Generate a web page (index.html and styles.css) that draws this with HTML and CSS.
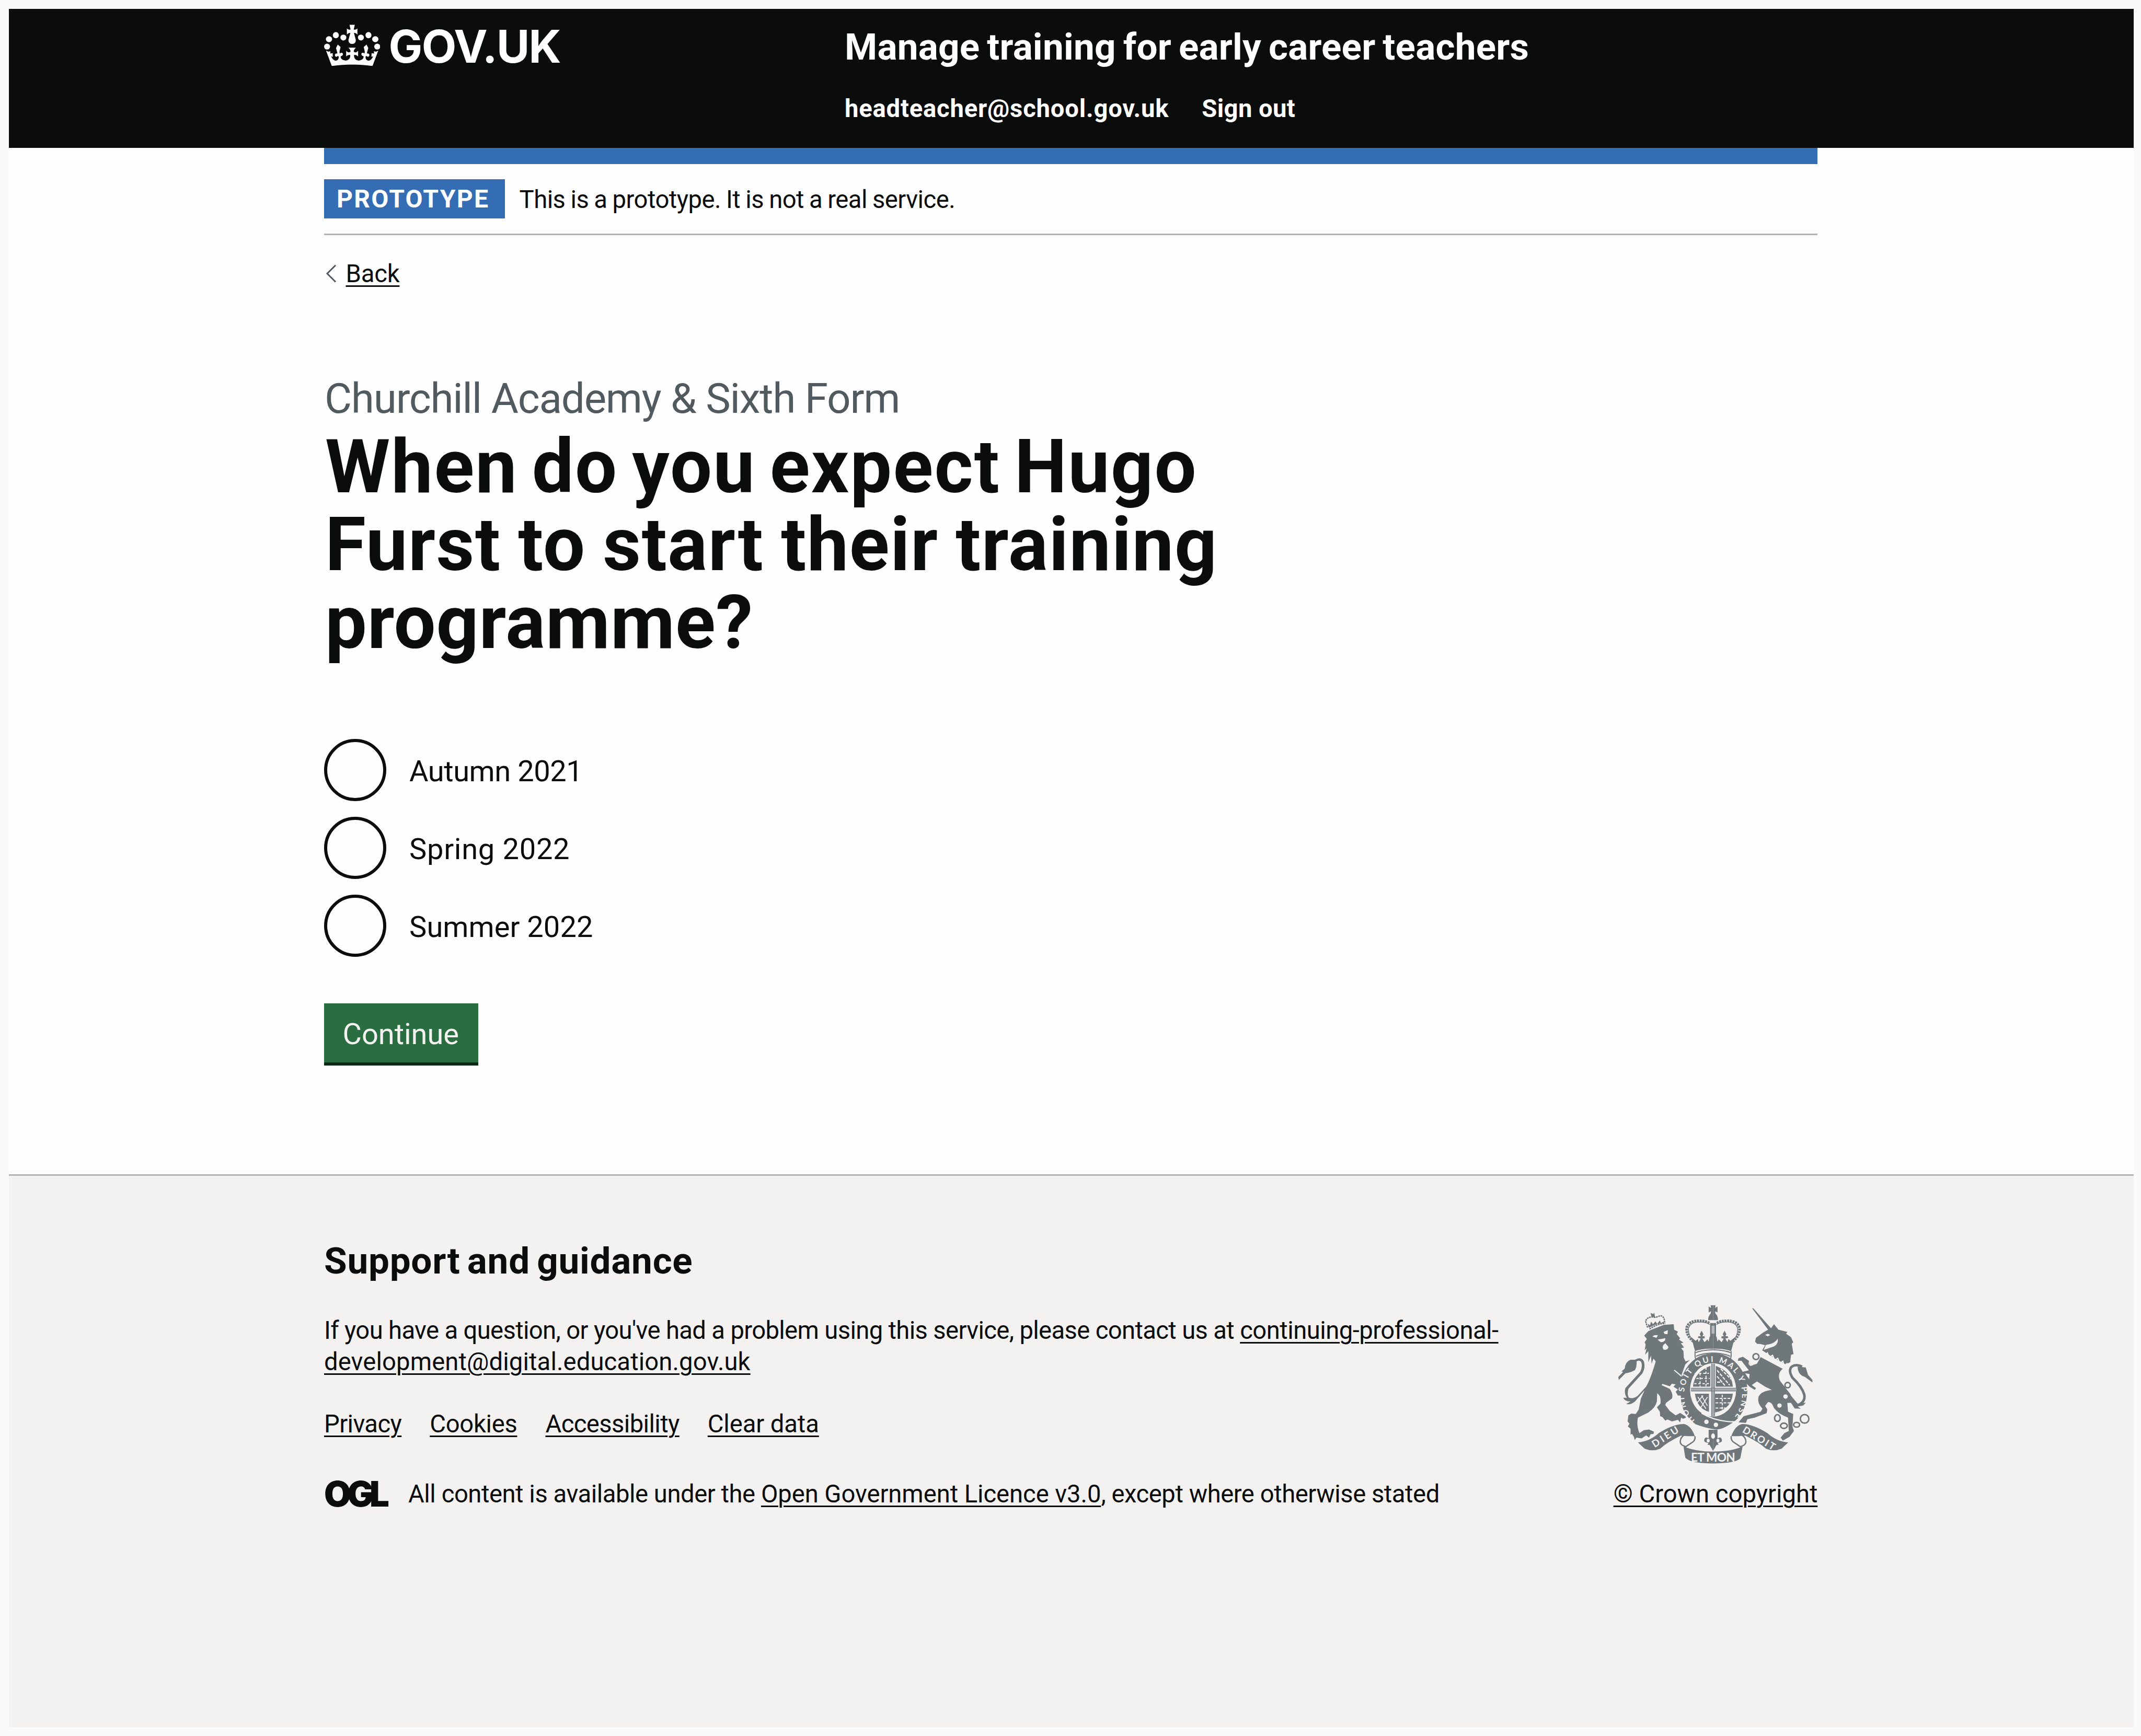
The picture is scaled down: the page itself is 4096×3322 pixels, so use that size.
FILE: index.html
```html
<!DOCTYPE html>
<html lang="en">
<head>
<meta charset="utf-8">
<title>When do you expect Hugo Furst to start their training programme?</title>
<link rel="stylesheet" href="styles.css">
</head>
<body>
<div class="page">
  <header class="header">
    <div class="container header-grid">
      <a class="logo" href="#">
        <svg class="crown" viewBox="77 163 320 283" preserveAspectRatio="none" aria-hidden="true">
          <defs>
            <g id="crown-half">
              <ellipse cx="94" cy="315" rx="17" ry="20"/>
              <ellipse cx="105" cy="265" rx="18" ry="20"/>
              <ellipse cx="144" cy="238" rx="17" ry="21"/>
              <ellipse cx="187" cy="254" rx="17" ry="20"/>
              <path d="M222 168H238V297Q216 297 216 270L227 222Q216 222 207 233V193Q216 204 228 200Z"/>
              <path d="M121 446L88 342L101 350L113 346L112 362L126 359L127 384L117 380Q127 408 145 410Q163 406 160 380Q152 376 149 384Q138 384 139 368Q144 358 153 362L151 350L145 325L155 301L171 318L165 348L166 362Q178 352 184 362Q186 378 172 380Q168 404 200 409Q229 405 226 372Q214 368 203 381V343Q216 360 228 350Q228 335 216 322H238V436Q170 437 121 446Z"/>
            </g>
          </defs>
          <use href="#crown-half"/>
          <use href="#crown-half" transform="translate(474 0) scale(-1 1)"/>
        </svg>
        <span class="logo-text">GOV.UK</span>
      </a>
      <div class="header-content">
        <a class="service-name" href="#">Manage training for early career teachers</a>
        <nav class="header-nav">
          <a class="account" href="#">headteacher@school.gov.uk</a>
          <a class="sign-out" href="#">Sign out</a>
        </nav>
      </div>
    </div>
  </header>

  <div class="container">
    <div class="header-bar"></div>
    <div class="phase-banner">
      <strong class="tag">PROTOTYPE</strong>
      <span class="phase-text">This is a prototype. It is not a real service.</span>
    </div>
    <div class="back">
      <svg class="chevron" viewBox="0 0 21 35" aria-hidden="true"><path d="M19 1.5L3 17.5L19 33.5" fill="none" stroke="#505a5f" stroke-width="3"/></svg>
      <a class="back-link" href="#">Back</a>
    </div>
    <main class="main">
      <span class="caption">Churchill Academy &amp; Sixth Form</span>
      <h1 class="heading"><span class="line line-a">When do you expect Hugo</span> <span class="line line-b">Furst to start their training</span> <span class="line line-c">programme?</span></h1>
      <div class="radios">
        <div class="radio"><span class="ring"></span><span class="radio-label autumn">Autumn 2021</span></div>
        <div class="radio"><span class="ring"></span><span class="radio-label spring">Spring 2022</span></div>
        <div class="radio"><span class="ring"></span><span class="radio-label">Summer 2022</span></div>
      </div>
      <button class="button">Continue</button>
    </main>
  </div>

  <footer class="footer">
    <div class="container footer-grid">
      <div class="footer-main">
        <h2 class="footer-title">Support and guidance</h2>
        <p class="footer-text">If you have a question, or you've had a problem using this service, please contact us at <a class="mail" href="#">continuing-professional-<span class="mail-end">development@digital.education.gov.uk</span></a></p>
        <div class="footer-links">
          <a class="privacy" href="#">Privacy</a>
          <a class="cookies" href="#">Cookies</a>
          <a class="access" href="#">Accessibility</a>
          <a class="clear-data" href="#">Clear data</a>
        </div>
        <div class="licence">
          <span class="ogl">OGL</span>
          <span class="licence-text">All content is available under the <a class="licence-link" href="#">Open Government Licence v3.0</a>, except where otherwise stated</span>
        </div>
      </div>
      <div class="copyright">
        <svg class="crest" viewBox="37 37 1315 1073" aria-hidden="true">
          <defs>
            <path id="motto" d="M560 822A196 222 0 1 1 830 785"/>
            <g id="arch">
              <path d="M545 285Q492 240 500 190Q515 145 580 145Q635 145 655 162" fill="none" stroke="#6f777b" stroke-width="18" stroke-dasharray="13 5"/>
              <path d="M545 285Q508 240 512 195Q525 155 580 153Q635 153 655 170" fill="none" stroke="#6f777b" stroke-width="5"/>
              <path d="M530 255L560 280L575 268L580 290L595 265L575 260L580 248L595 250L588 235L600 212L613 235L605 250L620 248L622 262L606 265L620 290L640 270L648 285L655 250L678 265V335Q610 330 556 350Z"/>
              <path d="M662 40H678V140H645V128Q650 105 662 95L664 80L648 88V48L664 58ZM658 160H678V270H658Z"/>
              <path d="M560 360Q600 343 678 341M562 385Q600 365 678 362M556 350V385L560 405" fill="none" stroke="#6f777b" stroke-width="7"/>
            </g>
            <g id="curl">
              <path d="M170 968Q250 960 310 905Q410 842 482 843Q528 852 555 925L510 925L460 922Q370 965 320 1010Q270 1032 215 1010Z"/>
              <path d="M555 925Q560 950 540 965L488 1000M500 905Q455 930 456 962Q455 985 490 995M470 925Q490 900 525 918" fill="none" stroke="#6f777b" stroke-width="9"/>
              <path d="M648 882H678V1025L655 985L640 982L648 970Q615 970 618 950Q625 925 648 940Z"/>
            </g>
          </defs>
          <g fill="#6f777b">
            <!-- lion -->
            <path d="M212 245L240 215L262 205L345 172L412 168L415 205L440 218L432 235L455 262L448 272L478 292L460 297L482 325L462 330L478 350L480 395L492 420L520 410L490 440L465 510L500 570L520 610L500 640L510 670L490 680L470 650L440 650L425 625L440 610L410 590L425 575L400 570L385 588L335 572L330 580L385 605Q410 640 400 670L360 700L355 715L385 755L425 785L455 768L490 790L495 800L475 808L462 800L455 832L440 815L400 825L370 812L355 820L335 795L320 790L318 760L298 730L322 705Q328 650 300 635L298 690Q290 730 240 765L170 800Q158 850 180 905L210 885L245 880L278 895L275 910L255 912L245 935L225 920L195 940L160 935L148 952L142 930L130 910L120 915L120 875L102 860L112 840L100 825L105 785L125 772L155 775L175 745L190 670L215 615L150 690Q120 715 90 708L120 690Q80 690 70 665L95 665Q75 640 85 600L185 490Q205 450 190 420Q175 408 160 420Q165 450 150 478Q120 495 85 500L40 545L37 525L70 490L58 488L80 468Q85 420 120 408L150 408Q190 385 210 420Q222 460 200 500L105 605Q95 650 110 665Q140 675 170 650L225 590Q255 540 290 420L275 400L262 435L258 380L240 425L240 350L218 375L228 330L215 345L222 305L215 290L230 268Z"/>
            <path d="M248 200Q300 165 355 162M235 190L222 150Q225 125 262 118L290 122L320 110Q350 112 350 155" fill="none" stroke="#6f777b" stroke-width="9" stroke-dasharray="12 4"/>
            <path d="M240 185L238 165L252 175L258 150L272 168L288 148L300 165L318 142L325 160L345 150L348 160Q300 160 245 192ZM255 92L275 100L280 88L285 118L262 120Z"/>
            <!-- unicorn -->
            <path d="M942 60L950 60L1070 195L1090 168L1120 205L1180 220L1172 232L1205 255L1220 290L1210 300L1222 370L1205 375L1200 425L1170 440L1095 400L1010 345L1030 310L1000 302L975 300L962 285L968 260L1015 225L1050 205Z"/>
            <path d="M1000 390L1150 468Q1110 500 1130 550L1200 640L1225 700L1180 700L1185 760L1220 775L1215 860L1225 890L1195 930L1150 955L1135 935L1160 905L1190 890L1185 800Q1120 775 1090 735Q1075 692 1050 695L1030 720L1045 745L1040 770L960 800L910 810L900 835L850 832L885 790L1000 760L1012 740Q975 700 985 660Q1000 620 1075 612L1030 590L975 555L940 580L968 600L960 612L925 590L895 560L875 490L920 480L905 460L870 415L845 415L850 398L880 388L920 415L930 450L975 435Z"/>
            <path d="M1235 722Q1305 700 1295 645Q1280 590 1215 530Q1185 480 1210 455Q1240 435 1280 455" fill="none" stroke="#6f777b" stroke-width="17"/>
            <path d="M1250 455L1305 460L1320 510L1350 545L1350 562L1300 525Q1250 510 1250 455ZM1195 640L1250 705L1305 698L1288 718L1250 725L1272 740L1230 738L1205 700Z"/>
            <!-- garter, ribbons and crown -->
            <path fill-rule="evenodd" d="M678 365A226 257 0 0 1 910 612Q905 780 800 840Q740 880 700 880Q640 875 560 845Q460 770 460 660Q455 560 478 500Q540 370 678 365ZM678 432A156 180 0 0 0 678 792A156 180 0 0 0 678 432Z"/>
            <use href="#arch"/>
            <use href="#arch" transform="translate(1356 0) scale(-1 1)"/>
            <use href="#curl"/>
            <use href="#curl" transform="translate(1356 0) scale(-1 1)"/>
            <path d="M478 995Q560 1030 678 1030Q796 1030 878 995L862 1075Q835 1108 678 1110Q520 1108 490 1070Z"/>
            <!-- shield quarters -->
            <path d="M660 450V590H542Q552 490 660 450ZM696 450V590H812Q805 490 696 450ZM555 638H650V760Q570 740 555 638ZM690 638H812Q800 745 690 765Z"/>
            <path d="M528 610H832M678 436V790" fill="none" stroke="#a5abad" stroke-width="20"/>
            <path d="M528 600H832M528 620H832M668 436V790M688 436V790" fill="none" stroke="#6f777b" stroke-width="4"/>
          </g>
          <g fill="#f3f2f1">
            <path d="M268 252Q280 236 305 243L295 260ZM343 220L372 208L370 235L350 234ZM303 272L355 262Q358 285 325 290ZM342 308L355 296L376 322Q372 345 345 340Q330 325 342 308Z"/>
            <path d="M1030 240L1048 232L1065 240L1048 250ZM1020 342L1035 308L1070 300Q1100 290 1115 265Q1122 300 1090 318Z"/>
            <path d="M895 500L925 505L922 540Z"/>
            <path d="M668 178H688V232H668Z" fill="#b5b9ba"/>
            <circle cx="1168" cy="657" r="15"/><circle cx="1127" cy="718" r="15"/>
            <circle cx="633" cy="828" r="15"/><circle cx="697" cy="848" r="15"/>
            <ellipse cx="678" cy="925" rx="13" ry="18"/><ellipse cx="645" cy="955" rx="10" ry="12"/><ellipse cx="711" cy="955" rx="10" ry="12"/>
          </g>
          <g fill="none" stroke="#f3f2f1">
            <path d="M415 478L465 520M1005 388L1150 466" stroke-width="7"/>
            <path d="M1012 352L1030 378L1045 362L1060 392L1080 378L1095 412L1115 398L1130 432L1150 418L1158 450L1182 432" stroke-width="8"/>
            <path d="M555 500H650M565 535H655M550 570H655M590 470V590M630 460V590" stroke-width="7" stroke-dasharray="16 12"/>
            <path d="M705 480L790 580M705 520L760 585M730 470L800 540M705 560H740" stroke-width="8" stroke-dasharray="22 8"/>
            <path d="M575 660L630 740M600 650L640 720M640 660L590 740M610 650L570 700" stroke-width="6"/>
            <path d="M695 670H800M695 700H800M695 735H780M740 645V755" stroke-width="7" stroke-dasharray="18 9"/>
            <path d="M600 770Q700 830 830 828" stroke-width="8"/>
          </g>
          <g fill="none" stroke="#6f777b" stroke-width="10">
            <circle cx="968" cy="387" r="20"/><circle cx="935" cy="432" r="14" stroke="#f3f2f1" stroke-width="6"/><circle cx="1182" cy="580" r="18"/>
            <ellipse cx="1113" cy="803" rx="19" ry="23"/><ellipse cx="1157" cy="855" rx="23" ry="18"/><ellipse cx="1243" cy="848" rx="20" ry="16"/><circle cx="1297" cy="808" r="29"/>
            <path d="M925 520L965 545L950 515L975 530" stroke-width="7"/>
          </g>
          <g class="crest-motto">
            <text font-size="54"><textPath href="#motto" startOffset="6" textLength="1010">HONI SOIT QUI MAL Y PENSE</textPath></text>
            <text font-size="80" x="528" y="1096" textLength="300">ET MON</text>
            <text font-size="66" transform="translate(283 1004) rotate(-33)" textLength="200">DIEU</text>
            <text font-size="66" transform="translate(872 896) rotate(31)" textLength="245">DROIT</text>
          </g>
        </svg>
        <a class="copyright-link" href="#">© Crown copyright</a>
      </div>
    </div>
  </footer>
</div>
</body>
</html>
```
FILE: styles.css
```css
* {
  box-sizing: border-box;
}

body {
  margin: 0;
  background: #fafafa;
  color: #0b0c0c;
  font-family: Roboto, "Liberation Sans", sans-serif;
  font-size: 47.2px;
  line-height: 60px;
}

a {
  color: inherit;
  text-decoration-thickness: 3px;
  text-underline-offset: 6px;
}

.page {
  display: flex;
  flex-direction: column;
  height: 3322px;
  padding: 17px 14.4px 17px 17px;
}

.page > .container {
  background: #fefefe;
}

.container {
  width: 100%;
  padding: 0 604.6px 0 603px;
}

.header {
  height: 266px;
  background: #0b0c0c;
  color: #fff;
}

.header a {
  text-decoration: none;
}

.header-grid {
  display: grid;
  grid-template-columns: 996px 1fr;
}

.logo {
  display: flex;
  align-items: flex-start;
  gap: 16px;
  padding-top: 27px;
}

.crown {
  width: 107.4px;
  height: 80.4px;
  margin-top: 2px;
  fill: #fff;
}

.logo-text {
  font-family: Inter, "Liberation Sans", sans-serif;
  font-size: 86.4px;
  font-weight: 700;
  line-height: 90px;
  letter-spacing: -1.6px;
}

.header-content {
  display: flex;
  flex-direction: column;
  gap: 43px;
  padding-top: 28px;
  font-weight: 700;
}

.service-name {
  font-size: 71px;
  line-height: 90px;
  letter-spacing: 0.25px;
  word-spacing: -4px;
}

.header-nav {
  display: flex;
  gap: 63px;
}

.account {
  letter-spacing: 0.8px;
}

.sign-out {
  letter-spacing: 0.39px;
}

.header-bar {
  height: 31px;
  background: #346db4;
}

.phase-banner {
  display: flex;
  align-items: center;
  gap: 28px;
  padding: 29px 0;
  border-bottom: 3px solid #b1b4b6;
  line-height: 75px;
}

.tag {
  width: 345.5px;
  padding-left: 24px;
  background: #346db4;
  color: #fff;
  font-size: 48px;
  letter-spacing: 2.3px;
}

.phase-text {
  margin-bottom: -3px;
  letter-spacing: -0.5px;
  word-spacing: -1.2px;
}

.back {
  display: flex;
  align-items: center;
  gap: 17.5px;
  margin-top: 43px;
}

.chevron {
  width: 21px;
  height: 35px;
  margin-left: 3px;
}

.back-link {
  margin: 1px 0 -1px;
  letter-spacing: -0.2px;
}

.main {
  padding: 165px 0 214.5px;
}

.caption {
  display: block;
  padding-left: 1px;
  color: #505a5f;
  font-size: 80px;
  line-height: 90px;
  letter-spacing: -1.2px;
}

.heading {
  margin: 11px 0 0;
  padding-left: 2px;
  font-size: 142px;
  line-height: 149px;
}

.line {
  display: block;
}

.line-a {
  letter-spacing: 2.3px;
  word-spacing: -11px;
}

.line-b {
  letter-spacing: 1.5px;
  word-spacing: -4px;
}

.line-c {
  letter-spacing: 0.9px;
}

.radios {
  display: flex;
  flex-direction: column;
  gap: 29.8px;
  margin-top: 148px;
}

.radio {
  display: flex;
  align-items: center;
  gap: 44px;
}

.ring {
  width: 119.1px;
  height: 119.1px;
  border: 6px solid #0b0c0c;
  border-radius: 50%;
}

.radio-label {
  padding-top: 5px;
  font-size: 56px;
  letter-spacing: 0.05px;
}

.autumn {
  letter-spacing: -0.45px;
}

.spring {
  letter-spacing: 0.7px;
}

.button {
  display: block;
  width: 294.5px;
  height: 112.6px;
  margin-top: 89.5px;
  padding: 5px 0 0 35.5px;
  border: 0;
  background: #2a6d40;
  box-shadow: 0 6px 0 #0b2a19;
  color: #f3f2f1;
  font-family: inherit;
  font-size: 56px;
  letter-spacing: -0.05px;
  text-align: left;
}

.footer {
  flex: 1;
  padding-top: 118px;
  border-top: 3px solid #b1b4b6;
  background: #f3f2f1;
}

.footer-grid {
  display: grid;
  grid-template-columns: 2467px 390px;
  align-items: end;
}

.footer-title {
  margin: 0;
  font-size: 71px;
  line-height: 90px;
  letter-spacing: 0.75px;
  word-spacing: -5px;
}

.footer-text {
  margin: 59px 0;
  line-height: 59.5px;
  letter-spacing: -0.64px;
}

.mail {
  letter-spacing: -0.52px;
}

.mail-end {
  letter-spacing: 0.12px;
}

.footer-links {
  display: flex;
  gap: 54px;
}

.privacy {
  letter-spacing: -0.6px;
}

.cookies {
  letter-spacing: -0.3px;
}

.access {
  letter-spacing: -0.6px;
}

.clear-data {
  letter-spacing: -0.1px;
}

.licence {
  display: flex;
  gap: 39px;
  margin-top: 74px;
}

.ogl {
  width: 122px;
  font-family: Inter, sans-serif;
  font-size: 67px;
  font-weight: 900;
  letter-spacing: -7.8px;
}

.licence-text {
  letter-spacing: -0.45px;
}

.licence-link {
  letter-spacing: -0.06px;
}

.copyright {
  display: flex;
  flex-direction: column;
  align-items: center;
  gap: 28.5px;
}

.crest {
  width: 372px;
  height: 303.5px;
}

.crest-motto {
  fill: #f3f2f1;
  font-family: Lato, sans-serif;
  font-weight: 700;
}

.copyright-link {
  letter-spacing: 0;
  white-space: nowrap;
}
```
